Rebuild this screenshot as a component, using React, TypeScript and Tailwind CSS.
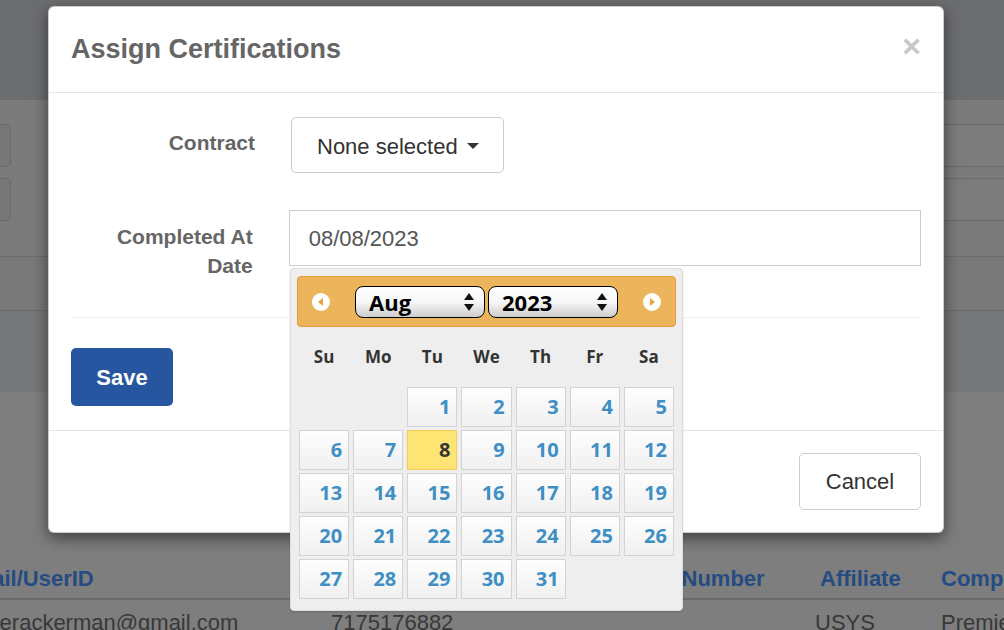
import React from "react";

const Arrow = ({ dir }: { dir: "prev" | "next" }) => (
  <svg width="20" height="20" viewBox="0 0 20 20">
    <circle cx="10" cy="10" r="9" fill="#ffffff" />
    {dir === "prev" ? (
      <path d="M12 6 L7 10 L12 14 Z" fill="#e9a23b" />
    ) : (
      <path d="M8 6 L13 10 L8 14 Z" fill="#e9a23b" />
    )}
  </svg>
);

const SelectArrows = () => (
  <svg width="12" height="22" viewBox="0 0 12 22">
    <path d="M6 2 L11 9 L1 9 Z" fill="#111" />
    <path d="M1 13 L11 13 L6 20 Z" fill="#111" />
  </svg>
);

const FakeSelect = ({ value }: { value: string }) => (
  <div className="flex h-[32px] w-[130px] items-center justify-between rounded-[8px] border-[1.5px] border-black bg-gradient-to-b from-white via-[#f7f7f7] to-[#cdcdcd] pl-[13px] pr-[9px]">
    <span className="text-[22px] font-bold leading-none text-black">{value}</span>
    <SelectArrows />
  </div>
);

const App = () => {
  const dayNames = ["Su", "Mo", "Tu", "We", "Th", "Fr", "Sa"];
  // Aug 2023 starts on a Tuesday
  const cells: (number | null)[] = [null, null];
  for (let d = 1; d <= 31; d++) cells.push(d);

  return (
    <div className="relative h-[630px] w-[1004px] overflow-hidden bg-[#7e7e7e] font-['Liberation_Sans',Arial,sans-serif]">
      {/* page behind the backdrop */}
      <div className="flex h-full flex-col">
        <div className="h-[100px] bg-[#6c6d6f]" />
        <div className="flex h-[157px] flex-col gap-[11px] border-b border-[#6c6c6c] bg-[#7b7b7b] pt-[24px]">
          {[0, 1].map((r) => (
            <div key={r} className="flex h-[43px] justify-between">
              <div className="w-[11px] rounded-r-[5px] border border-l-0 border-[#696969] bg-[#777777]" />
              <div className="w-[70px] border-y border-l border-[#6a6a6a] bg-[#7c7c7c]" />
            </div>
          ))}
        </div>
        <div className="h-[54px] border-b border-[#6c6c6c] bg-[#797979]" />
        <div className="h-[81px] bg-[#757677]" />
        <div className="flex-1 overflow-hidden bg-[#7e7e7e] pt-[166px]">
          <div className="ml-[-48px] flex h-[42px] items-center whitespace-nowrap border-b-2 border-[#6a6a6a] text-[22px] font-bold text-[#244c82]">
            <div className="w-[373px] shrink-0 px-[6px]">Email/UserID</div>
            <div className="w-[293px] shrink-0 px-[6px]">Phone</div>
            <div className="w-[196px] shrink-0 px-[6px]">Pass Number</div>
            <div className="w-[121px] shrink-0 px-[6px]">Affiliate</div>
            <div className="shrink-0 px-[6px]">Company</div>
          </div>
          <div className="ml-[-48px] flex h-[44px] items-center whitespace-nowrap text-[22px] text-[#383838]">
            <div className="w-[373px] shrink-0 px-[6px]">
              <span className="ml-[11px]">peterackerman@gmail.com</span>
            </div>
            <div className="w-[293px] shrink-0 px-[6px]">7175176882</div>
            <div className="w-[191px] shrink-0 px-[6px]" />
            <div className="w-[126px] shrink-0 px-[6px]">USYS</div>
            <div className="shrink-0 px-[6px]">Premier</div>
          </div>
        </div>
      </div>

      {/* modal */}
      <div className="absolute left-[48px] top-[6px] flex h-[527px] w-[896px] flex-col rounded-[6px] border border-black/20 bg-white shadow-[0_5px_15px_rgba(0,0,0,0.5)]">
        <div className="flex h-[86px] items-center justify-between border-b border-[#e5e5e5] px-[22px]">
          <h4 className="text-[27px] font-bold text-[#666666]">Assign Certifications</h4>
          <span className="mb-[8px] text-[32px] font-bold leading-none text-[#c8c8c8]">×</span>
        </div>

        <div className="border-b border-[#e5e5e5] px-[22px] pb-[24px] pt-[24px]">
          <div className="flex items-start">
            <label className="w-[184px] pt-[11px] text-right text-[21px] font-bold leading-[29px] text-[#666666]">
              Contract
            </label>
            <button className="ml-[36px] flex h-[56px] items-center gap-[9px] rounded-[5px] border border-[#cccccc] bg-white pl-[25px] pr-[24px] pt-[2px] text-[22px] text-[#333333]">
              None selected
              <span className="inline-block h-0 w-0 border-x-[6px] border-t-[6px] border-x-transparent border-t-[#333333]" />
            </button>
          </div>

          <div className="mt-[37px] flex items-start">
            <label className="w-[184px] pt-[12px] text-right text-[21px] font-bold leading-[29px] text-[#666666]">
              Completed At Date
            </label>
            <div className="ml-[36px] flex h-[56px] w-[640px] items-center border border-[#cccccc] px-[19px] text-[22px] text-[#555555]">
              08/08/2023
            </div>
          </div>

          <div className="mt-[37px] border-t border-[#eeeeee]" />

          <button className="mt-[30px] h-[58px] w-[102px] rounded-[5px] bg-[#2756a1] text-[22px] font-bold text-white">
            Save
          </button>
        </div>

        <div className="flex flex-1 justify-end pr-[22px] pt-[22px]">
          <button className="h-[57px] w-[122px] rounded-[5px] border border-[#cccccc] bg-white text-[22px] text-[#333333]">
            Cancel
          </button>
        </div>
      </div>

      {/* datepicker popup */}
      <div className="absolute left-[290px] top-[268px] h-[343px] w-[393px] rounded-[4px] border border-[#dddddd] bg-[#eeeeee] px-[6px] pt-[7px] font-['Open_Sans',sans-serif] shadow-[0_1px_2px_rgba(0,0,0,0.15)]">
        <div className="flex h-[51px] items-center justify-between rounded-[4px] border border-[#e29c3a] bg-[#ecb45b] px-[13px]">
          <Arrow dir="prev" />
          <div className="flex gap-[3px]">
            <FakeSelect value="Aug" />
            <FakeSelect value="2023" />
          </div>
          <Arrow dir="next" />
        </div>

        <div className="px-[2px]">
          <div className="grid h-[60px] grid-cols-7 items-center gap-x-[4px]">
            {dayNames.map((d) => (
              <div key={d} className="text-center text-[17px] font-bold text-[#333333]">
                {d}
              </div>
            ))}
          </div>
          <div className="grid grid-cols-7 gap-x-[4px] gap-y-[3px]">
            {cells.map((d, i) =>
              d === null ? (
                <div key={i} className="h-[40px]" />
              ) : d === 8 ? (
                <div
                  key={i}
                  className="flex h-[40px] items-center justify-end border border-[#f3cd55] bg-[#fde473] pr-[6px] text-[20px] font-bold text-[#363636]"
                >
                  {d}
                </div>
              ) : (
                <div
                  key={i}
                  className="flex h-[40px] items-center justify-end border border-[#d3d3d3] bg-gradient-to-b from-[#fefefe] to-[#f0f0f0] pr-[6px] text-[20px] font-bold text-[#3f8fc5]"
                >
                  {d}
                </div>
              )
            )}
          </div>
        </div>
      </div>
    </div>
  );
};

export default App;
